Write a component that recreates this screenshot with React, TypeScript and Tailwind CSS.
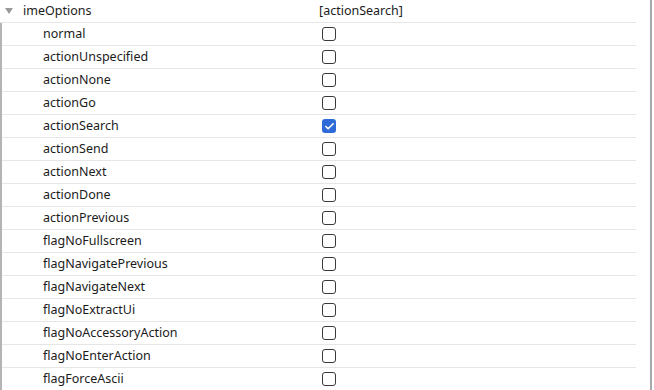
import { Check } from 'lucide-react'

const flags = [
  'normal',
  'actionUnspecified',
  'actionNone',
  'actionGo',
  'actionSearch',
  'actionSend',
  'actionNext',
  'actionDone',
  'actionPrevious',
  'flagNoFullscreen',
  'flagNavigatePrevious',
  'flagNavigateNext',
  'flagNoExtractUi',
  'flagNoAccessoryAction',
  'flagNoEnterAction',
  'flagForceAscii',
]

const selected = ['actionSearch']

function Box({ checked }: { checked: boolean }) {
  return checked ? (
    <span className="ml-[3px] flex h-[14px] w-[14px] items-center justify-center rounded-[3px] bg-[#2f6bd8]">
      <Check className="h-[11px] w-[11px] text-white" strokeWidth={3.5} />
    </span>
  ) : (
    <span className="ml-[3px] h-[14px] w-[14px] rounded-[3px] border border-[#3a3a3a] bg-white" />
  )
}

export default function App() {
  return (
    <div
      className="flex h-[390px] w-[654px] overflow-hidden bg-white text-[12.5px] text-[#1b1b1b]"
      style={{ fontFamily: '"Noto Sans", "Open Sans", sans-serif' }}
    >
      <div className="flex w-[650px] flex-col">
        <div className="flex h-[23px] w-[636px] shrink-0 items-center border-b border-[#e6e6e6]">
          <svg className="ml-[5px] h-[8px] w-[8px]" viewBox="0 0 8 8">
            <path d="M0 1 L8 1 L4 7 Z" fill="#9a9a9a" />
          </svg>
          <span className="ml-[10px] w-[296px] leading-none">imeOptions</span>
          <span className="leading-none">[{selected.join(', ')}]</span>
        </div>
        <div className="flex-1 border-l-2 border-[#b4b4b4]">
          {flags.map((flag) => (
            <div
              key={flag}
              className="flex h-[23px] w-[634px] shrink-0 items-center border-b border-[#e6e6e6]"
            >
              <span className="ml-[41px] w-[276px] leading-none">{flag}</span>
              <Box checked={selected.includes(flag)} />
            </div>
          ))}
        </div>
      </div>
      <div className="h-full w-[2px] bg-[#a8a8a8]" />
    </div>
  )
}
